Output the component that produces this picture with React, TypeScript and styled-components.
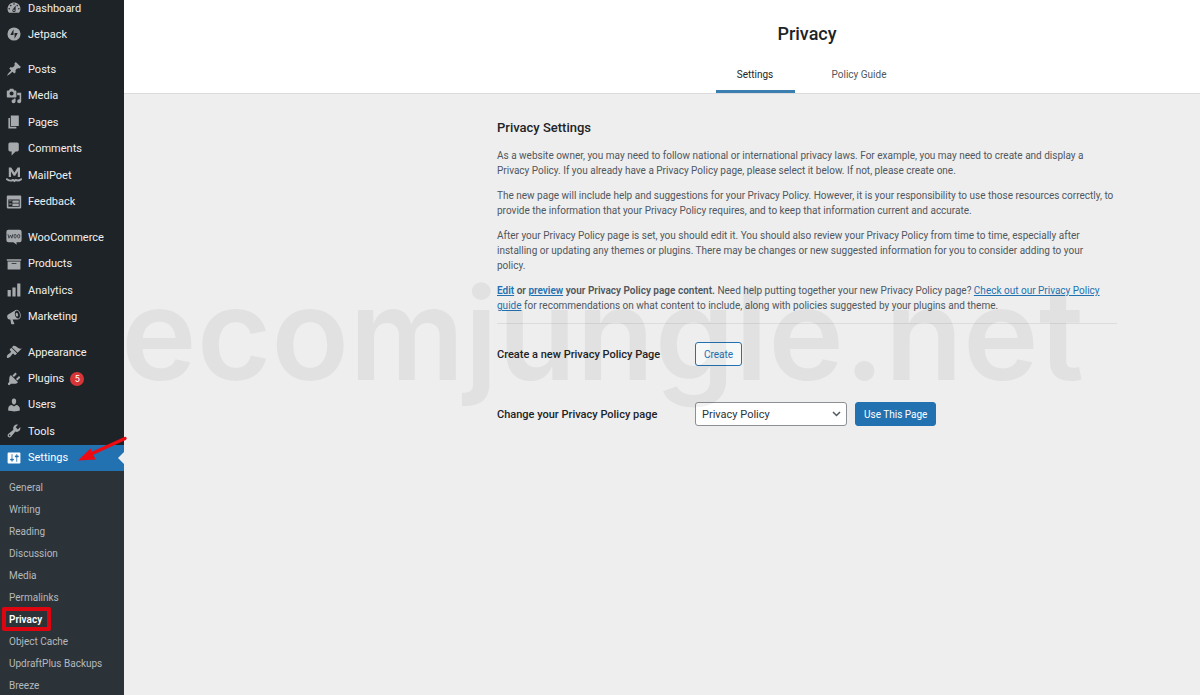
import React from "react";
import styled, { createGlobalStyle, css } from "styled-components";

const GlobalStyle = createGlobalStyle`
  *, *::before, *::after { box-sizing: border-box; }
  body {
    margin: 0;
    background: #eeeeee;
    color: #50575e;
    font-family: Roboto, "Open Sans", sans-serif;
    font-size: 10px;
    line-height: 15px;
  }
  h1, h2, p, ul { margin: 0; padding: 0; }
  ul { list-style: none; }
`;

const Shell = styled.div`
  display: flex;
  height: 100vh;
  overflow: hidden;
`;

const Sidebar = styled.nav`
  position: relative;
  z-index: 2;
  flex: none;
  width: 124px;
  background: #1d2327;
`;

const MenuStack = styled.div`
  display: flex;
  flex-direction: column;
  gap: 9px;
  margin-top: -5px;
`;

const MenuGroup = styled.ul<{ $height: number }>`
  display: grid;
  grid-auto-rows: 1fr;
  height: ${(p) => p.$height}px;
`;

const MenuLink = styled.a<{ $active?: boolean }>`
  position: relative;
  display: flex;
  align-items: center;
  gap: 6px;
  height: 100%;
  padding-left: 6px;
  color: #f0f0f1;
  font-size: 11px;
  text-decoration: none;
  white-space: nowrap;
  ${(p) =>
    p.$active &&
    css`
      background: #2271b1;
      color: #ffffff;
      &::after {
        content: "";
        position: absolute;
        top: 50%;
        right: 0;
        margin-top: -6px;
        border: 6px solid transparent;
        border-left-width: 0;
        border-right-color: #eeeeee;
      }
    `}
`;

const MenuIcon = styled.svg<{ $active?: boolean }>`
  flex: none;
  width: 16px;
  height: 16px;
  fill: ${(p) => (p.$active ? "#ffffff" : "#a7aaad")};
`;

const CountBadge = styled.span`
  width: 14px;
  height: 14px;
  border-radius: 7px;
  background: #d63638;
  color: #ffffff;
  font-size: 9px;
  line-height: 14px;
  text-align: center;
`;

const Submenu = styled.ul`
  height: 100vh;
  padding-top: 6px;
  background: #2c3338;
`;

const SubmenuLink = styled.a<{ $current?: boolean }>`
  position: relative;
  display: block;
  padding-left: 9px;
  color: #b4b9be;
  font-size: 10px;
  line-height: 22px;
  text-decoration: none;
  white-space: nowrap;
  ${(p) =>
    p.$current &&
    css`
      color: #ffffff;
      font-weight: 600;
      &::after {
        content: "";
        position: absolute;
        top: -2px;
        left: 2px;
        width: 49px;
        height: 24px;
        border: 4px solid #dd0510;
        border-radius: 2px;
      }
    `}
`;

const ArrowMark = styled.svg`
  position: absolute;
  top: 434px;
  left: 76px;
  width: 52px;
  height: 30px;
`;

const Main = styled.main`
  position: relative;
  flex: 1;
  min-width: 0;
`;

const Header = styled.header`
  display: flex;
  flex-direction: column;
  align-items: center;
  padding: 22px 0 0 290px;
  border-bottom: 1px solid #dcdcde;
  background: #ffffff;
`;

const Title = styled.h1`
  color: #1d2327;
  font-size: 18px;
  font-weight: 500;
  line-height: 24px;
`;

const Tabs = styled.nav`
  display: grid;
  grid-template-columns: 79px 79px;
  gap: 25px;
  margin-top: 9px;
`;

const Tab = styled.a<{ $active?: boolean }>`
  height: 38px;
  border-bottom: 3px solid ${(p) => (p.$active ? "#3b7fb0" : "transparent")};
  color: ${(p) => (p.$active ? "#1d2327" : "#50575e")};
  line-height: 40px;
  text-align: center;
  text-decoration: none;
`;

const Body = styled.section`
  display: flex;
  justify-content: center;
  padding: 24px 0 0 290px;
`;

const Column = styled.div`
  width: 620px;
`;

const SectionTitle = styled.h2`
  margin-bottom: 10px;
  color: #1d2327;
  font-size: 13px;
  font-weight: 500;
  line-height: 20px;
`;

const Paragraph = styled.p`
  margin-bottom: 10px;
`;

const Strong = styled.strong`
  font-weight: 600;
`;

const TextLink = styled.a`
  color: #2271b1;
`;

const Divider = styled.hr`
  height: 1px;
  margin: 0;
  border: 0;
  background: #dcdcde;
`;

const FormRow = styled.form`
  display: flex;
  align-items: center;
  gap: 8px;
  height: 24px;
  margin-top: 18px;
  & + & {
    margin-top: 36px;
  }
`;

const FieldLabel = styled.label`
  width: 190px;
  color: #1d2327;
  font-size: 11px;
  font-weight: 500;
`;

const Button = styled.button<{ $primary?: boolean }>`
  height: 24px;
  padding: 0 8px;
  border: 1px solid #2271b1;
  border-radius: 3px;
  background: ${(p) => (p.$primary ? "#2271b1" : "#f6f7f7")};
  color: ${(p) => (p.$primary ? "#ffffff" : "#2271b1")};
  font: inherit;
  white-space: nowrap;
`;

const SelectWrap = styled.span`
  position: relative;
  display: flex;
  width: 152px;
`;

const Select = styled.select`
  width: 100%;
  height: 24px;
  padding: 0 20px 0 6px;
  appearance: none;
  border: 1px solid #8c8f94;
  border-radius: 3px;
  background: #ffffff;
  color: #2c3338;
  font: inherit;
  font-size: 11px;
`;

const Chevron = styled.svg`
  position: absolute;
  top: 8px;
  right: 6px;
  width: 9px;
  height: 8px;
  pointer-events: none;
`;

const Watermark = styled.div`
  position: absolute;
  top: 254px;
  left: -3px;
  color: rgba(0, 0, 0, 0.05);
  font-family: Inter, sans-serif;
  font-size: 128px;
  font-weight: 600;
  line-height: 160px;
  white-space: nowrap;
  pointer-events: none;
`;

type Item = { label: string; icon: React.ReactNode; badge?: string; active?: boolean };

const groups: { height: number; items: Item[] }[] = [
  {
    height: 52,
    items: [
      {
        label: "Dashboard",
        icon: (
          <path d="M3.76 16h12.48A7.998 7.998 0 0 0 10 3a7.998 7.998 0 0 0-6.24 13zM10 4c.55 0 1 .45 1 1s-.45 1-1 1-1-.45-1-1 .45-1 1-1zM6 6c.55 0 1 .45 1 1s-.45 1-1 1-1-.45-1-1 .45-1 1-1zm8 0c.55 0 1 .45 1 1s-.45 1-1 1-1-.45-1-1 .45-1 1-1zm-5.37 5.55L12 7v6c0 1.1-.9 2-2 2s-2-.9-2-2c0-.57.24-1.08.63-1.45zM4 10c.55 0 1 .45 1 1s-.45 1-1 1-1-.45-1-1 .45-1 1-1zm12 0c.55 0 1 .45 1 1s-.45 1-1 1-1-.45-1-1 .45-1 1-1zm-5 3c0-.55-.45-1-1-1s-1 .45-1 1 .45 1 1 1 1-.45 1-1z" />
        ),
      },
      {
        label: "Jetpack",
        icon: (
          <path
            fillRule="evenodd"
            d="M10 1.8a8.2 8.2 0 1 0 0 16.4 8.2 8.2 0 0 0 0-16.4zM9.4 4v7.4H5.4zM10.7 16V8.6h4z"
          />
        ),
      },
    ],
  },
  {
    height: 159,
    items: [
      {
        label: "Posts",
        icon: (
          <path d="M10.44 3.02l1.82-1.82 6.36 6.35-1.83 1.82c-1.05-.68-2.48-.57-3.41.36l-.75.75c-.92.93-1.04 2.35-.35 3.41l-1.83 1.82-2.41-2.41-2.8 2.79c-.42.42-3.38 2.71-3.8 2.29s1.86-3.39 2.28-3.81l2.79-2.79L4.1 9.36l1.83-1.82c1.05.69 2.48.57 3.4-.36l.75-.75c.93-.92 1.05-2.35.36-3.41z" />
        ),
      },
      {
        label: "Media",
        icon: (
          <path d="M13 11V4c0-.55-.45-1-1-1h-1.67L9 1H5L3.67 3H2c-.55 0-1 .45-1 1v7c0 .55.45 1 1 1h10c.55 0 1-.45 1-1zM7 4.5c1.38 0 2.5 1.12 2.5 2.5S8.38 9.5 7 9.5 4.5 8.38 4.5 7 5.62 4.5 7 4.5zM14 6h5v10.5c0 1.38-1.12 2.5-2.5 2.5S14 17.88 14 16.5s1.12-2.5 2.5-2.5c.17 0 .34.02.5.05V9h-3V6zm-4 8.05V13h2v3.5c0 1.38-1.12 2.5-2.5 2.5S7 17.88 7 16.5 8.12 14 9.5 14c.17 0 .34.02.5.05z" />
        ),
      },
      { label: "Pages", icon: <path d="M6 15V2h10v13H6zm-1 1h8v2H3V5h2v11z" /> },
      {
        label: "Comments",
        icon: <path d="M5 2h9c1.1 0 2 .9 2 2v7c0 1.1-.9 2-2 2h-2l-5 5v-5H5c-1.1 0-2-.9-2-2V4c0-1.1.9-2 2-2z" />,
      },
      {
        label: "MailPoet",
        icon: (
          <>
            <path d="M3.5 12.5V.5h3L10.5 7l4-6.5h3v12h-2.800V5.500L11.500 11h-2L6.300 5.500v7z" />
            <path
              d="M1.200 15.200c2.800 2.200 6.300 1.800 7.800.9l1.500 1.600 1.500-1.600c1.500.9 4.200 1.300 7-.9"
              fill="none"
              stroke="#a7aaad"
              strokeWidth="2.4"
              strokeLinecap="round"
              strokeLinejoin="round"
            />
          </>
        ),
      },
      {
        label: "Feedback",
        icon: (
          <path d="M2 2h16c.55 0 1 .45 1 1v14c0 .55-.45 1-1 1H2c-.55 0-1-.45-1-1V3c0-.55.45-1 1-1zm15 14V7H3v9h14zM4 8v1h3V8H4zm4 0v3h8V8H8zm-4 4v1h3v-1H4zm4 0v3h8v-3H8z" />
        ),
      },
    ],
  },
  {
    height: 106,
    items: [
      {
        label: "WooCommerce",
        icon: (
          <>
            <path d="M3 1h14a2.500 2.500 0 0 1 2.500 2.500V14a2.500 2.500 0 0 1-2.500 2.500h-4l.5 3.200-4.300-3.200H3A2.500 2.500 0 0 1 .5 14V3.500A2.500 2.500 0 0 1 3 1z" />
            <g fill="none" stroke="#3c4348" strokeWidth="1.2">
              <path d="M2.500 6.500l1.200 5 2-4 1.600 4 1.300-5" />
              <ellipse cx="11.4" cy="9" rx="1.4" ry="2.3" />
              <ellipse cx="15.9" cy="9" rx="1.4" ry="2.3" />
            </g>
          </>
        ),
      },
      { label: "Products", icon: <path d="M19 4v2H1V4h18zM2 7h16v10H2V7zm11 3V9H7v1h6z" /> },
      { label: "Analytics", icon: <path d="M18 18V2h-4v16h4zm-6 0V7H8v11h4zm-6 0v-8H2v8h4z" /> },
      {
        label: "Marketing",
        icon: (
          <path d="M18.15 5.94c.46 1.62.38 3.22-.02 4.48-.42 1.28-1.26 2.18-2.3 2.48-.16.06-.26.06-.4.06-.06.02-.12.02-.18.02-.06.02-.14.02-.22.02h-6.8l2.22 5.5c.02.14-.06.26-.14.34-.08.1-.24.16-.34.16H6.95c-.1 0-.26-.06-.34-.16-.08-.08-.16-.2-.14-.34l-1-5.500H4.250l-.02-.02c-.5.06-1.08-.18-1.54-.62s-.88-1.08-1.06-1.88c-.24-.8-.2-1.56-.02-2.2.18-.62.58-1.08 1.06-1.300l.02-.02 9-5.400c.1-.06.18-.1.24-.16.06-.04.14-.08.24-.12.16-.08.28-.12.5-.18 1.040-.3 2.240.1 3.220.98s1.840 2.240 2.260 3.860zm-2.580 5.980h-.02c.4-.1.740-.34 1.040-.7.58-.7.860-1.760.860-3.040 0-.64-.1-1.300-.28-1.980-.34-1.360-1.020-2.500-1.780-3.240s-1.680-1.100-2.460-.88c-.82.22-1.400.96-1.700 2-.32 1.040-.28 2.360.06 3.720.38 1.360 1 2.500 1.800 3.240.78.740 1.620 1.100 2.480.88zm-2.540-7.080c.22-.04.42-.02.62.04.38.16.76.48 1.020 1s.42 1.200.42 1.780c0 .3-.04.56-.12.8-.18.48-.44.84-.86.94-.34.1-.8-.06-1.140-.4s-.64-.86-.78-1.500c-.18-.62-.12-1.240.02-1.720s.48-.84.82-.94z" />
        ),
      },
    ],
  },
  {
    height: 132,
    items: [
      {
        label: "Appearance",
        icon: (
          <path d="M14.48 11.06L7.41 3.99l1.5-1.5c.5-.56 2.3-.47 3.51.32 1.21.8 1.43 1.28 2.91 2.1 1.18.64 2.45 1.26 4.45.85zm-.71.71L6.7 4.7 4.93 6.47c-.39.39-.39 1.02 0 1.41l1.06 1.06c.39.39.39 1.03 0 1.42-.6.6-1.43 1.11-2.21 1.69-.35.26-.7.53-1.01.84C1.43 14.23.4 16.08 1.4 17.07c.99 1 2.84-.03 4.18-1.36.31-.31.58-.66.85-1.02.57-.78 1.08-1.61 1.69-2.21.39-.39 1.02-.39 1.41 0l1.06 1.06c.39.39 1.02.39 1.41 0z" />
        ),
      },
      {
        label: "Plugins",
        badge: "5",
        icon: (
          <path d="M13.11 4.36L9.87 7.6 8 5.73l3.24-3.24c.35-.34 1.05-.2 1.56.32.52.51.66 1.21.31 1.55zm-8 1.77l.91-1.12 9.01 9.01-1.19.84c-.71.71-2.63 1.16-3.82 1.16H6.14L4.9 17.26c-.59.59-1.54.59-2.12 0-.59-.58-.59-1.53 0-2.12l1.24-1.24v-3.88c0-1.13.4-3.19 1.09-3.89zm7.26 3.97l3.24-3.24c.34-.35 1.04-.21 1.55.31.52.51.66 1.21.31 1.55l-3.24 3.25z" />
        ),
      },
      {
        label: "Users",
        icon: (
          <path d="M10 9.25c-2.27 0-2.73-3.44-2.73-3.44C7 4.02 7.82 2 9.97 2c2.16 0 2.98 2.02 2.71 3.81 0 0-.41 3.44-2.68 3.44zm0 2.57L12.72 10c2.39 0 4.52 2.33 4.52 4.53v2.49s-3.65 1.13-7.24 1.13c-3.65 0-7.24-1.13-7.24-1.13v-2.49c0-2.25 1.94-4.48 4.47-4.48z" />
        ),
      },
      {
        label: "Tools",
        icon: (
          <path d="M16.68 9.77c-1.34 1.34-3.3 1.67-4.95.99l-5.41 6.52c-.99.99-2.59.99-3.58 0s-.99-2.59 0-3.57l6.52-5.42c-.68-1.65-.35-3.61.99-4.95 1.28-1.28 3.12-1.62 4.72-1.06l-2.89 2.89 2.82 2.82 2.86-2.87c.53 1.58.18 3.39-1.08 4.65zM3.81 16.21c.4.39 1.04.39 1.43 0 .4-.4.4-1.04 0-1.43-.39-.4-1.03-.4-1.43 0-.39.39-.39 1.03 0 1.43z" />
        ),
      },
      {
        label: "Settings",
        active: true,
        icon: (
          <path d="M18 16V4c0-.55-.45-1-1-1H3c-.55 0-1 .45-1 1v12c0 .55.45 1 1 1h14c.55 0 1-.45 1-1zM8 11h1c.55 0 1 .45 1 1s-.45 1-1 1H8v1.5c0 .28-.22.5-.5.5s-.5-.22-.5-.5V13H6c-.55 0-1-.45-1-1s.45-1 1-1h1V5.5c0-.28.22-.5.5-.5s.5.22.5.5V11zm5-2h-1c-.55 0-1-.45-1-1s.45-1 1-1h1V5.5c0-.28.22-.5.5-.5s.5.22.5.5V7h1c.55 0 1 .45 1 1s-.45 1-1 1h-1v5.5c0 .28-.22.5-.5.5s-.5-.22-.5-.5V9z" />
        ),
      },
    ],
  },
];

const submenu = [
  "General",
  "Writing",
  "Reading",
  "Discussion",
  "Media",
  "Permalinks",
  "Privacy",
  "Object Cache",
  "UpdraftPlus Backups",
  "Breeze",
];

export default function App() {
  return (
    <>
      <GlobalStyle />
      <Shell>
        <Sidebar>
          <MenuStack>
            {groups.map((group) => (
              <MenuGroup key={group.items[0].label} $height={group.height}>
                {group.items.map((item) => (
                  <li key={item.label}>
                    <MenuLink href="#" $active={item.active}>
                      <MenuIcon viewBox="0 0 20 20" $active={item.active} aria-hidden="true">
                        {item.icon}
                      </MenuIcon>
                      {item.label}
                      {item.badge && <CountBadge>{item.badge}</CountBadge>}
                    </MenuLink>
                  </li>
                ))}
              </MenuGroup>
            ))}
          </MenuStack>
          <Submenu>
            {submenu.map((label) => (
              <li key={label}>
                <SubmenuLink href="#" $current={label === "Privacy"}>
                  {label}
                </SubmenuLink>
              </li>
            ))}
          </Submenu>
          <ArrowMark viewBox="0 0 52 30" aria-hidden="true">
            <path d="M49 4.500L16 19.500" stroke="#ee0a12" strokeWidth="3.4" strokeLinecap="round" />
            <path d="M2 26.500L14.500 14.500L19.500 25.500z" fill="#ee0a12" />
          </ArrowMark>
        </Sidebar>
        <Main>
          <Header>
            <Title>Privacy</Title>
            <Tabs>
              <Tab href="#" $active>
                Settings
              </Tab>
              <Tab href="#">Policy Guide</Tab>
            </Tabs>
          </Header>
          <Body>
            <Column>
              <SectionTitle>Privacy Settings</SectionTitle>
              <Paragraph>
                As a website owner, you may need to follow national or international privacy laws. For example, you may
                need to create and display a Privacy Policy. If you already have a Privacy Policy page, please select it
                below. If not, please create one.
              </Paragraph>
              <Paragraph>
                The new page will include help and suggestions for your Privacy Policy. However, it is your
                responsibility to use those resources correctly, to provide the information that your Privacy Policy
                requires, and to keep that information current and accurate.
              </Paragraph>
              <Paragraph>
                After your Privacy Policy page is set, you should edit it. You should also review your Privacy Policy
                from time to time, especially after installing or updating any themes or plugins. There may be changes
                or new suggested information for you to consider adding to your
                <br />
                policy.
              </Paragraph>
              <Paragraph>
                <Strong>
                  <TextLink href="#">Edit</TextLink> or <TextLink href="#">preview</TextLink> your Privacy Policy page
                  content.
                </Strong>{" "}
                Need help putting together your new Privacy Policy page?{" "}
                <TextLink href="#">Check out our Privacy Policy guide</TextLink> for recommendations on what content to
                include, along with policies suggested by your plugins and theme.
              </Paragraph>
              <Divider />
              <FormRow>
                <FieldLabel htmlFor="create-page">Create a new Privacy Policy Page</FieldLabel>
                <Button id="create-page" type="button">
                  Create
                </Button>
              </FormRow>
              <FormRow>
                <FieldLabel htmlFor="policy-page">Change your Privacy Policy page</FieldLabel>
                <SelectWrap>
                  <Select id="policy-page" defaultValue="Privacy Policy">
                    <option>Privacy Policy</option>
                  </Select>
                  <Chevron viewBox="0 0 9 8" aria-hidden="true">
                    <path d="M1 2l3.500 3.500L8 2" fill="none" stroke="#50575e" strokeWidth="1.5" />
                  </Chevron>
                </SelectWrap>
                <Button type="button" $primary>
                  Use This Page
                </Button>
              </FormRow>
            </Column>
          </Body>
          <Watermark aria-hidden="true">ecomjungle.net</Watermark>
        </Main>
      </Shell>
    </>
  );
}
